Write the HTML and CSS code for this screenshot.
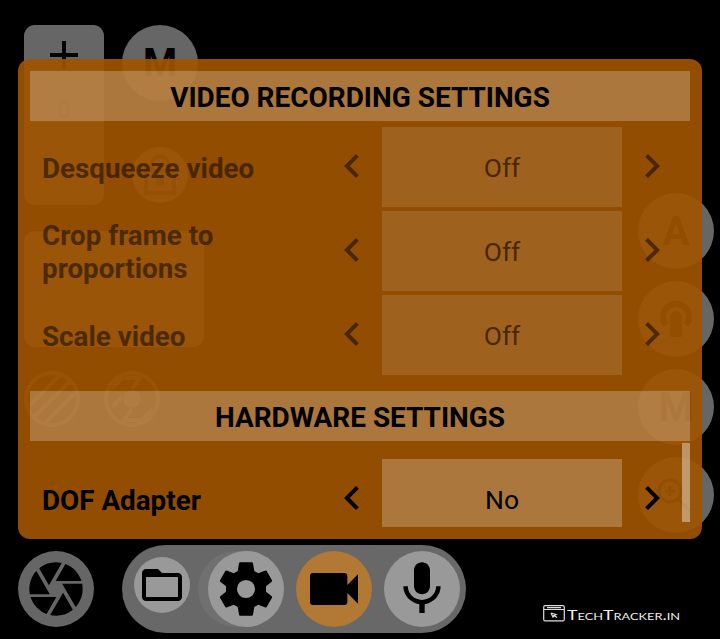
FILE: index.html
```html
<!DOCTYPE html>
<html lang="en">
<head>
<meta charset="utf-8">
<title>Camera settings</title>
<link rel="stylesheet" href="styles.css">
</head>
<body>
<svg class="defs" aria-hidden="true">
  <symbol id="left" viewBox="0 0 24 24"><path d="M15.41 7.41 14 6l-6 6 6 6 1.41-1.41L10.83 12z"/></symbol>
  <symbol id="right" viewBox="0 0 24 24"><path d="M10 6 8.59 7.41 13.17 12l-4.58 4.59L10 18l6-6z"/></symbol>
</svg>
<main class="screen">
  <div class="hud">
    <div class="hud-left">
      <div class="hud-top">
        <div class="exposure">
          <svg class="plus" viewBox="0 0 28 28"><path d="M14 0v28M0 14h28"/></svg>
          <div class="exposure-value">0</div>
        </div>
        <div class="hud-mode">
          <div class="dial mode">M</div>
          <div class="small-dial"><svg width="40" height="48" viewBox="0 0 40 48"><path d="M6 20h28v22H6zM12 20v-7a8 8 0 0 1 16 0v7" fill="none" stroke="#000" stroke-width="4"/><circle cx="20" cy="31" r="4"/></svg></div>
        </div>
      </div>
      <div class="histogram"></div>
      <div class="overlays">
        <svg viewBox="0 0 56 56"><circle cx="28" cy="28" r="26"/><path d="M5 35 36 4M9 47 47 9M21 52 52 21"/></svg>
        <svg viewBox="0 0 56 56"><circle cx="28" cy="28" r="26"/><path d="M8 18 18 7h18l-8 11M48 38 38 49H20l8-11M8 36l10-10"/><circle class="dot" cx="28" cy="28" r="7"/></svg>
      </div>
    </div>
    <div class="hud-right">
      <div class="dial">A</div>
      <div class="dial"><svg width="36" height="40" viewBox="0 0 36 40"><path d="M8 26a13 13 0 1 1 20 0" fill="none" stroke="#000" stroke-width="6"/><path d="M12 38V18a6 6 0 0 1 12 0v20z"/></svg></div>
      <div class="dial">M</div>
      <div class="dial"><svg class="zoom-icon" width="36" height="36" viewBox="0 0 36 36"><circle cx="14" cy="14" r="11"/><path d="m22 22 12 12M14 9v10M9 14h10"/></svg></div>
    </div>
  </div>

  <section class="panel">
    <div class="scroller">
      <h2>VIDEO RECORDING SETTINGS</h2>
      <div class="rows">
        <div class="row disabled"><span class="label">Desqueeze video</span><svg class="chev"><use href="#left"/></svg><span class="value">Off</span><svg class="chev"><use href="#right"/></svg></div>
        <div class="row disabled"><span class="label">Crop frame to proportions</span><svg class="chev"><use href="#left"/></svg><span class="value">Off</span><svg class="chev"><use href="#right"/></svg></div>
        <div class="row disabled"><span class="label">Scale video</span><svg class="chev"><use href="#left"/></svg><span class="value">Off</span><svg class="chev"><use href="#right"/></svg></div>
      </div>
      <h2>HARDWARE SETTINGS</h2>
      <div class="rows last">
        <div class="row"><span class="label">DOF Adapter</span><svg class="chev"><use href="#left"/></svg><span class="value">No</span><svg class="chev"><use href="#right"/></svg></div>
      </div>
    </div>
    <div class="scrollbar"></div>
  </section>

  <footer class="bottom">
    <div class="dial"><svg class="icon" viewBox="0 0 24 24"><path d="M9.4 10.5l4.77-8.26C13.47 2.09 12.75 2 12 2c-2.4 0-4.6.85-6.32 2.25l3.66 6.35.06-.1zM21.54 9c-.92-2.92-3.15-5.26-6-6.34L11.88 9h9.66zm.26 1h-7.49l.29.5 4.76 8.25C21 16.97 22 14.61 22 12c0-.69-.07-1.35-.2-2zM8.54 12l-3.9-6.75C3.01 7.03 2 9.39 2 12c0 .69.07 1.35.2 2h7.49l-1.15-2zm-6.08 3c.92 2.92 3.15 5.26 6 6.34L12.12 15H2.46zm11.27 0l-3.9 6.76c.7.15 1.42.24 2.17.24 2.4 0 4.6-.85 6.32-2.25l-3.66-6.35-.93 1.6z"/></svg></div>
    <nav class="tabs">
      <div class="folder"><svg viewBox="0 0 24 24"><path d="M20 6h-8l-2-2H4c-1.1 0-1.99.9-1.99 2L2 18c0 1.1.9 2 2 2h16c1.1 0 2-.9 2-2V8c0-1.1-.9-2-2-2zm0 12H4V8h16v10z"/></svg></div>
      <div class="ghost"><div class="tab"><svg class="icon" viewBox="0 0 24 24"><path fill-rule="evenodd" d="M9.7 2h4.6l.3.25.5 3 1.5.85 2.7-1.05.4.15 2.1 3.6-.05.4L19.5 11v2l2.25 1.8.05.4-2.1 3.6-.4.15-2.7-1.05-1.5.85-.5 3-.3.25H9.7l-.3-.25-.5-3-1.5-.85-2.7 1.05-.4-.15-2.1-3.6.05-.4L4.5 13v-2L2.25 9.2l-.05-.4 2.1-3.6.4-.15 2.7 1.05 1.5-.85.5-3zM12 8.6a3.4 3.4 0 1 0 0 6.8 3.4 3.4 0 0 0 0-6.8z"/></svg></div></div>
      <div class="tab active"><svg class="icon" viewBox="0 0 24 24"><path d="M17 10.5V7c0-.55-.45-1-1-1H4c-.55 0-1 .45-1 1v10c0 .55.45 1 1 1h12c.55 0 1-.45 1-1v-3.5l4 4v-11l-4 4z"/></svg></div>
      <div class="tab"><svg class="icon" viewBox="0 0 24 24"><path d="M12 14c1.66 0 3-1.34 3-3V5c0-1.66-1.34-3-3-3S9 3.34 9 5v6c0 1.66 1.34 3 3 3zm5.3-3c0 3-2.54 5.1-5.3 5.1S6.7 14 6.7 11H5c0 3.41 2.72 6.23 6 6.72V21h2v-3.28c3.28-.48 6-3.3 6-6.72h-1.7z"/></svg></div>
    </nav>
    <div class="brand">
      <svg width="22" height="17" viewBox="0 0 22 17"><rect x=".7" y=".7" width="20.6" height="15.2" rx="1.5"/><path d="M1 4.5h20M4 2.6h14"/><path d="m8 8 5 1.5-2 .8 3 2.2M8 8l2 4 1.2-1.7"/></svg>
      <svg width="115" height="17" viewBox="0 0 115 17"><text class="brand-text" x="0" y="14.5" textLength="113" lengthAdjust="spacingAndGlyphs">TechTracker.in</text></svg>
    </div>
  </footer>
</main>
</body>
</html>
```

FILE: styles.css
```css
* { box-sizing: border-box; }
body { margin: 0; background: #000; color: #000; font-family: Roboto, sans-serif; }
svg { display: block; }
.defs { position: absolute; width: 0; height: 0; }
.screen { position: relative; width: 720px; height: 639px; overflow: hidden; padding: 59px 18px 0; background: #000; }

/* Viewfinder controls beneath the settings panel */
.hud { position: absolute; inset: 0; display: flex; justify-content: space-between; padding: 25px 6px 0 24px; }
.hud-top { display: flex; gap: 18px; }
.exposure { width: 80px; height: 180px; border-radius: 11px; background: #666; padding-top: 16px; }
.plus { width: 28px; height: 28px; margin: 0 auto 17px; stroke: #000; stroke-width: 4; }
.exposure-value { border-top: 1px solid #555; padding-top: 9px; text-align: center; font-size: 24px; line-height: 28px; color: #363636; }
.hud-mode { display: flex; flex-direction: column; align-items: center; gap: 46px; }
.dial { flex: none; display: flex; align-items: center; justify-content: center; width: 76px; height: 76px; border-radius: 50%; background: #666; font-size: 40px; font-weight: 700; }
.dial.mode { font-size: 39px; }
.small-dial { display: flex; align-items: center; justify-content: center; width: 56px; height: 56px; border-radius: 50%; background: #666; }
.small-dial svg { opacity: .6; }
.histogram { width: 180px; height: 116px; margin-top: 26px; border-radius: 11px; background: #666; }
.overlays { display: flex; gap: 24px; margin-top: 24px; }
.overlays svg { width: 56px; height: 56px; fill: none; stroke: #4c4c4c; stroke-width: 4; }
.overlays .dot { fill: #4c4c4c; }
.hud-right { display: flex; flex-direction: column; gap: 12px; padding-top: 168px; }
.hud-right svg { opacity: .8; }
.zoom-icon { fill: none; stroke: #000; stroke-width: 3; margin-right: 4px; }

.panel { position: relative; width: 684px; height: 480px; padding: 12px; border-radius: 12px; background: rgba(158, 84, 0, .92); }
.scroller { height: 456px; overflow: hidden; }
h2 { margin: 0; height: 50px; padding-top: 1px; background: rgba(255, 255, 255, .24); text-align: center; font-size: 27.95px; line-height: 52px; font-weight: 700; }
.rows { padding: 4px 0 14px; }
.rows.last { padding-top: 16px; }
.row { display: grid; grid-template-columns: 280px 60px 240px 60px; align-items: center; height: 84px; padding-left: 12px; }
.label { padding-top: 2px; width: 240px; font-size: 27.8px; line-height: 33px; font-weight: 700; }
.value { height: 80px; background: rgba(255, 255, 255, .24); text-align: center; font-size: 26.5px; line-height: 82px; }
.chev { width: 48px; height: 48px; margin: 0 0 2px 6px; }
.disabled { opacity: .5; }
.scrollbar { position: absolute; right: 12px; top: 384px; width: 8px; height: 79px; background: rgba(255, 255, 255, .4); }

.bottom { position: relative; display: flex; align-items: center; height: 88px; margin-top: 6px; }
.icon { width: 64px; height: 64px; }
.tabs { display: flex; align-items: center; width: 344px; height: 88px; margin-left: 28px; padding-left: 12px; border-radius: 44px; background: #686868; }
.folder { display: flex; align-items: center; justify-content: center; width: 56px; height: 56px; margin: 0 8px 8px 0; border-radius: 50%; background: #999; }
.folder svg { width: 48px; height: 48px; }
.ghost { width: 86px; height: 76px; padding-left: 10px; border-radius: 38px; background: #707070; }
.tab { display: flex; align-items: center; justify-content: center; width: 76px; height: 76px; border-radius: 50%; background: #999; }
.tab.active { margin: 0 12px; background: #b17934; }
.brand { display: flex; gap: 2px; margin: 49px 0 0 77px; }
.brand svg { fill: none; stroke: #ddd; stroke-width: 1.2; }
.brand .brand-text { fill: #eee; stroke: none; font-family: Lato, sans-serif; font-size: 12.5px; font-variant: small-caps; }
```
